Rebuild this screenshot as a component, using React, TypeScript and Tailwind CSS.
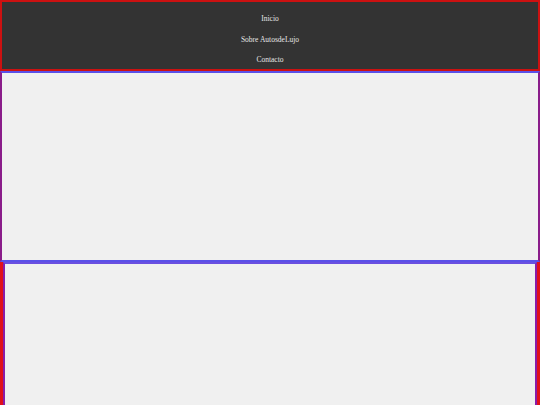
const links = ["Inicio", "Sobre AutosdeLujo", "Contacto"];

export default function App() {
  return (
    <div className="w-[540px] h-[405px] overflow-hidden bg-[#f0f0f0] font-['Liberation_Serif',serif]">
      <header className="h-[71px] overflow-hidden border-2 border-[#cc1111] bg-[#333333]">
        <nav>
          <ul className="flex flex-col items-center pt-[7px]">
            {links.map((l) => (
              <li key={l} className="leading-[20.5px] text-[7.5px] text-[#e6e6e6]">
                {l}
              </li>
            ))}
          </ul>
        </nav>
      </header>

      <section className="h-[191px] border-x-2 border-x-[#8a1c8a] border-y-2 border-y-[#5a50e8] bg-[#f0f0f0]" />

      <section className="h-[160px] border-x-[3px] border-x-[#e0101a]">
        <div className="h-full border-2 border-[#8a1ca8] border-t-[#6a4fe0] bg-[#f0f0f0]" />
      </section>
    </div>
  );
}
